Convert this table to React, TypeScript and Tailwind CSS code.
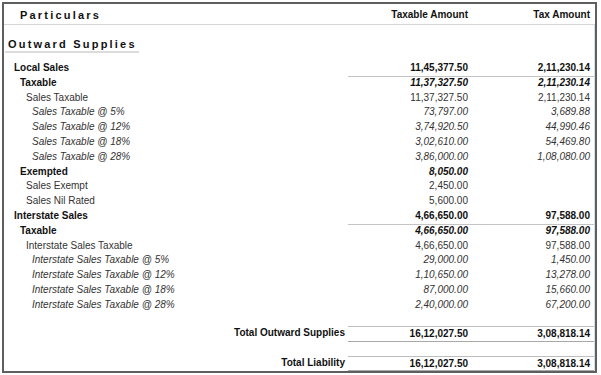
type Row = {
  label: string;
  level: 0 | 1 | 2 | 3;
  kind: 'head' | 'sub' | 'plain' | 'rate';
  taxable: string;
  tax?: string;
  rule?: boolean;
};

const rows: Row[] = [
  { label: 'Local Sales', level: 0, kind: 'head', taxable: '11,45,377.50', tax: '2,11,230.14', rule: true },
  { label: 'Taxable', level: 1, kind: 'sub', taxable: '11,37,327.50', tax: '2,11,230.14' },
  { label: 'Sales Taxable', level: 2, kind: 'plain', taxable: '11,37,327.50', tax: '2,11,230.14' },
  { label: 'Sales Taxable @ 5%', level: 3, kind: 'rate', taxable: '73,797.00', tax: '3,689.88' },
  { label: 'Sales Taxable @ 12%', level: 3, kind: 'rate', taxable: '3,74,920.50', tax: '44,990.46' },
  { label: 'Sales Taxable @ 18%', level: 3, kind: 'rate', taxable: '3,02,610.00', tax: '54,469.80' },
  { label: 'Sales Taxable @ 28%', level: 3, kind: 'rate', taxable: '3,86,000.00', tax: '1,08,080.00' },
  { label: 'Exempted', level: 1, kind: 'sub', taxable: '8,050.00' },
  { label: 'Sales Exempt', level: 2, kind: 'plain', taxable: '2,450.00' },
  { label: 'Sales Nil Rated', level: 2, kind: 'plain', taxable: '5,600.00' },
  { label: 'Interstate Sales', level: 0, kind: 'head', taxable: '4,66,650.00', tax: '97,588.00', rule: true },
  { label: 'Taxable', level: 1, kind: 'sub', taxable: '4,66,650.00', tax: '97,588.00' },
  { label: 'Interstate Sales Taxable', level: 2, kind: 'plain', taxable: '4,66,650.00', tax: '97,588.00' },
  { label: 'Interstate Sales Taxable @ 5%', level: 3, kind: 'rate', taxable: '29,000.00', tax: '1,450.00' },
  { label: 'Interstate Sales Taxable @ 12%', level: 3, kind: 'rate', taxable: '1,10,650.00', tax: '13,278.00' },
  { label: 'Interstate Sales Taxable @ 18%', level: 3, kind: 'rate', taxable: '87,000.00', tax: '15,660.00' },
  { label: 'Interstate Sales Taxable @ 28%', level: 3, kind: 'rate', taxable: '2,40,000.00', tax: '67,200.00' },
];

const indent = ['pl-[10px]', 'pl-[16px]', 'pl-[22px]', 'pl-[28px]'];

const labelStyle = {
  head: 'font-bold text-[#111]',
  sub: 'font-bold text-[#111]',
  plain: 'text-[#333]',
  rate: 'italic text-[#333]',
};

const amountStyle = {
  head: 'font-bold text-[#111]',
  sub: 'font-bold italic text-[#111]',
  plain: 'text-[#333]',
  rate: 'italic text-[#333]',
};

function TotalRow({ label, taxable, tax, className }: { label: string; taxable: string; tax: string; className: string }) {
  return (
    <div className={`grid grid-cols-[344px_122px_124px] ${className}`}>
      <div className="pr-[3px] text-right font-bold text-[#111]">{label}</div>
      <div className="col-span-2 grid grid-cols-[122px_124px] border-y border-t-[#bdbdbd] border-b-[#a8a8a8]">
        <div className="pr-[2px] text-right font-bold text-[#111]">{taxable}</div>
        <div className="pr-[4px] text-right font-bold text-[#111]">{tax}</div>
      </div>
    </div>
  );
}

export default function App() {
  return (
    <div className="h-[375px] w-[601px] bg-white pt-[2px] font-['Liberation_Sans',Arial,sans-serif] text-[10px]">
      <div className="ml-[2px] w-[595px] border-2 border-[#5f5f5f] bg-white">
        <div className="grid h-[21px] grid-cols-[344px_122px_125px] border-b border-[#d6d6d6] pt-[4px] leading-[14px] font-bold text-[#111]">
          <div className="pl-[16px] text-[11px] tracking-[2.2px]">Particulars</div>
          <div className="pr-[2px] text-right">Taxable Amount</div>
          <div className="pr-[5px] text-right">Tax Amount</div>
        </div>

        <div className="border-r border-[#cfe0f0] leading-[14.8px]">
          <div className="pt-[13px]">
            <span className="ml-[1px] inline-block border-b-2 border-[#dcdcdc] pl-[3px] pr-[2px] text-[11px] leading-[13px] font-bold tracking-[2.2px] text-[#111]">
              Outward Supplies
            </span>
          </div>

          <div className="pt-[8px]">
            {rows.map((row, i) => (
              <div key={i} className="grid h-[14.8px] grid-cols-[344px_122px_124px]">
                <div className={`${indent[row.level]} ${labelStyle[row.kind]}`}>{row.label}</div>
                <div className={`pr-[2px] text-right ${amountStyle[row.kind]} ${row.rule ? 'border-b border-[#c4c4c4]' : ''}`}>
                  {row.taxable}
                </div>
                <div className={`pr-[4px] text-right ${amountStyle[row.kind]} ${row.rule ? 'border-b border-[#c4c4c4]' : ''}`}>
                  {row.tax ?? ''}
                </div>
              </div>
            ))}
          </div>

          <TotalRow className="mt-[13px] leading-[14px]" label="Total Outward Supplies" taxable="16,12,027.50" tax="3,08,818.14" />
          <TotalRow className="mt-[14px] leading-[13px]" label="Total Liability" taxable="16,12,027.50" tax="3,08,818.14" />
        </div>
      </div>
    </div>
  );
}
